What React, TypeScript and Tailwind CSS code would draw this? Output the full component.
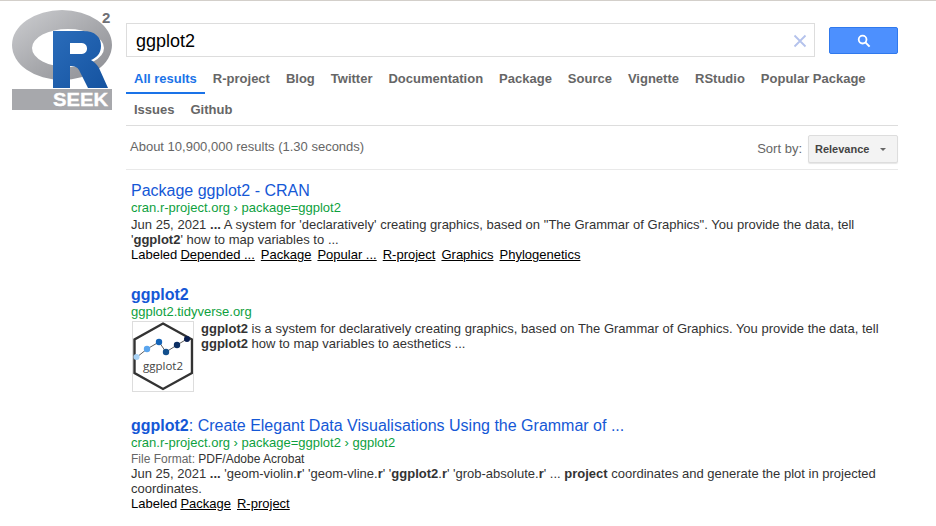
import React from "react";

const Logo = () => (
  <div className="w-[126px] shrink-0 pl-3 pt-[8px]">
    <svg width="102" height="102" viewBox="0 0 102 102" className="block">
      <defs>
        <linearGradient id="ring" x1="0" y1="0" x2="1" y2="1">
          <stop offset="0" stopColor="#cdced1" />
          <stop offset="0.55" stopColor="#a6a7ab" />
          <stop offset="1" stopColor="#8c8d93" />
        </linearGradient>
        <linearGradient id="blue" x1="0" y1="0" x2="1" y2="1">
          <stop offset="0" stopColor="#2a6cba" />
          <stop offset="1" stopColor="#1553a0" />
        </linearGradient>
      </defs>
      <path
        fillRule="evenodd"
        fill="url(#ring)"
        d="M0 36 A50 35 0 1 0 100 36 A50 35 0 1 0 0 36 Z M20 39 A36 19 0 1 1 92 39 A36 19 0 1 1 20 39 Z"
      />
      <path
        fillRule="evenodd"
        fill="url(#blue)"
        d="M41 22 H71 C83 22 89 28 89 37 C89 45 84 49 79 51 C83 53 85 56 87 59 L96 79 H76 L67 61 C65 58 63 57 58 57 V79 H41 Z M58 34 V45 H68 C73 45 75 43 75 39.5 C75 36 73 34 68 34 Z"
      />
      <rect x="0" y="80" width="100" height="21" fill="#a7a8ac" />
      <text x="41" y="97" fontFamily="Liberation Sans" fontWeight="700" fontSize="18.5" stroke="#ffffff" strokeWidth="0.35" fill="#ffffff" textLength="55" lengthAdjust="spacingAndGlyphs">
        SEEK
      </text>
      <text x="90" y="13.5" fontFamily="Liberation Sans" fontWeight="700" fontSize="15" fill="#6f7075">
        2
      </text>
    </svg>
  </div>
);

const tabs = ["R-project", "Blog", "Twitter", "Documentation", "Package", "Source", "Vignette", "RStudio", "Popular Package", "Issues", "Github"];

const Tabs = () => (
  <div className="mt-[12px] flex h-[57px] flex-wrap content-start gap-y-[6px] border-b border-[#dddddd] text-[13px] leading-[15px] font-bold text-[#666666]">
    <div className="h-[25px] border-b-[2px] border-[#1a73e8] px-2 pt-[2px] text-[#1a73e8]">All results</div>
    {tabs.map((t) => (
      <div key={t} className="h-[25px] px-2 pt-[2px]">{t}</div>
    ))}
  </div>
);

const Link = ({ children }: { children: React.ReactNode }) => (
  <span className="mr-[6px] text-black underline">{children}</span>
);

const Labeled = ({ items }: { items: string[] }) => (
  <div className="h-[15px] leading-[15px] text-black">
    Labeled <span className="ml-[-0.5px]">{items.map((i) => <Link key={i}>{i}</Link>)}</span>
  </div>
);

const Thumb = () => (
  <div className="h-[71px] w-[62px] shrink-0 border border-[#dddddd] bg-white">
    <svg width="60" height="69" viewBox="0 0 60 69" className="block">
      <polygon points="30,1.5 59,17.5 59,51 30,67 1.5,51 1.5,17.5" fill="#ffffff" stroke="#333333" strokeWidth="2.4" />
      <polyline points="4,35 14,27 26,20 33,30 44,23 54,17" fill="none" stroke="#333333" strokeWidth="0.8" />
      <circle cx="3.5" cy="35" r="3" fill="#a8d2f5" />
      <circle cx="14" cy="27" r="3.2" fill="#5aa5ee" />
      <circle cx="26" cy="20" r="3.2" fill="#1464b8" />
      <circle cx="33" cy="30" r="3.2" fill="#124f8c" />
      <circle cx="44" cy="23" r="3.2" fill="#0d2f63" />
      <circle cx="54" cy="17" r="3" fill="#0a1f50" />
      <text x="30" y="48" textAnchor="middle" fontFamily="Open Sans, sans-serif" fontSize="11.5" fill="#444444">ggplot2</text>
    </svg>
  </div>
);

export default function App() {
  return (
    <div className="h-[526px] w-[936px] overflow-hidden border-t border-[#d3cfca] bg-white font-['Liberation_Sans',Arial,sans-serif]">
      <div className="flex">
        <Logo />
        <main className="w-[772px]">
          <div className="mt-[22px] flex items-start">
            <div className="flex h-[34px] w-[689px] items-center border border-[#dddddd] pr-[6px] pl-[9px]">
              <span className="flex-1 pt-[2px] text-[18px] leading-[22px] text-black">ggplot2</span>
              <svg width="16" height="16" viewBox="0 0 16 16" className="mt-[1px]">
                <path d="M2.5 2.5 L13.5 13.5 M13.5 2.5 L2.5 13.5" stroke="#b4c2ec" strokeWidth="1.8" />
              </svg>
            </div>
            <div className="mt-[4px] ml-[14px] flex h-[27px] w-[69px] items-center justify-center rounded-[2px] border border-[#3079ed] bg-[#4d90fe]">
              <svg width="14" height="14" viewBox="0 0 14 14">
                <circle cx="5.6" cy="5.6" r="3.9" fill="none" stroke="#ffffff" strokeWidth="1.8" />
                <path d="M8.4 8.4 L12.6 12.6" stroke="#ffffff" strokeWidth="2" />
              </svg>
            </div>
          </div>

          <Tabs />

          <div className="flex h-[44px] items-start justify-between border-b border-[#e9e9e9] pl-1">
            <span className="mt-[13px] text-[13px] leading-[15px] text-[#666666]">About 10,900,000 results (1.30 seconds)</span>
            <div className="mt-[9px] flex items-center">
              <span className="mr-[6px] text-[13px] text-[#666666]">Sort by:</span>
              <div className="flex h-[28px] w-[90px] items-center rounded-[2px] border border-[#dddddd] bg-[#f3f3f3] pl-[6px] text-[11px] font-bold text-[#444444] shadow-[0_1px_1px_rgba(0,0,0,0.1)]">
                Relevance
                <span className="ml-[11px] h-0 w-0 border-x-[3px] border-t-[3px] border-x-transparent border-t-[#666666]" />
              </div>
            </div>
          </div>

          <div className="pl-[5px] text-[13px] leading-[15px] text-[#333333]">
            <section className="mt-[11px]">
              <h3 className="text-[16px] leading-[19px] text-[#1558d6]">Package ggplot2 - CRAN</h3>
              <div className="leading-[15px] text-[#0e9f3e]">cran.r-project.org › package=ggplot2</div>
              <p className="mt-[2px] w-[740px] [word-spacing:0.08px]">
                Jun 25, 2021 <b>...</b> A system for 'declaratively' creating graphics, based on "The Grammar of Graphics". You provide the data, tell '<b>ggplot2</b>' how to map variables to ...
              </p>
              <Labeled items={["Depended ...", "Package", "Popular ...", "R-project", "Graphics", "Phylogenetics"]} />
            </section>

            <section className="mt-[23px]">
              <h3 className="text-[16px] leading-[19px] font-bold text-[#1558d6]">ggplot2</h3>
              <div className="leading-[15px] text-[#0e9f3e]">ggplot2.tidyverse.org</div>
              <div className="mt-[2px] flex">
                <div className="ml-[1px]"><Thumb /></div>
                <p className="ml-[7px] w-[690px]">
                  <b>ggplot2</b> is a system for declaratively creating graphics, based on The Grammar of Graphics. You provide the data, tell <b>ggplot2</b> how to map variables to aesthetics ...
                </p>
              </div>
            </section>

            <section className="mt-[24px]">
              <h3 className="text-[16px] leading-[19px] text-[#1558d6]"><b>ggplot2</b>: Create Elegant Data Visualisations Using the Grammar of ...</h3>
              <div className="leading-[15px] text-[#0e9f3e]">cran.r-project.org › package=ggplot2 › ggplot2</div>
              <div className="mt-[2px] text-[12px] leading-[14px] text-[#666666]">File Format: <span className="text-[#333333]">PDF/Adobe Acrobat</span></div>
              <p className="w-[750px]">
                Jun 25, 2021 <b>...</b> 'geom-violin.<b>r</b>' 'geom-vline.<b>r</b>' '<b>ggplot2</b>.<b>r</b>' 'grob-absolute.<b>r</b>' ... <b>project</b> coordinates and generate the plot in projected coordinates.
              </p>
              <Labeled items={["Package", "R-project"]} />
            </section>
          </div>
        </main>
      </div>
    </div>
  );
}
